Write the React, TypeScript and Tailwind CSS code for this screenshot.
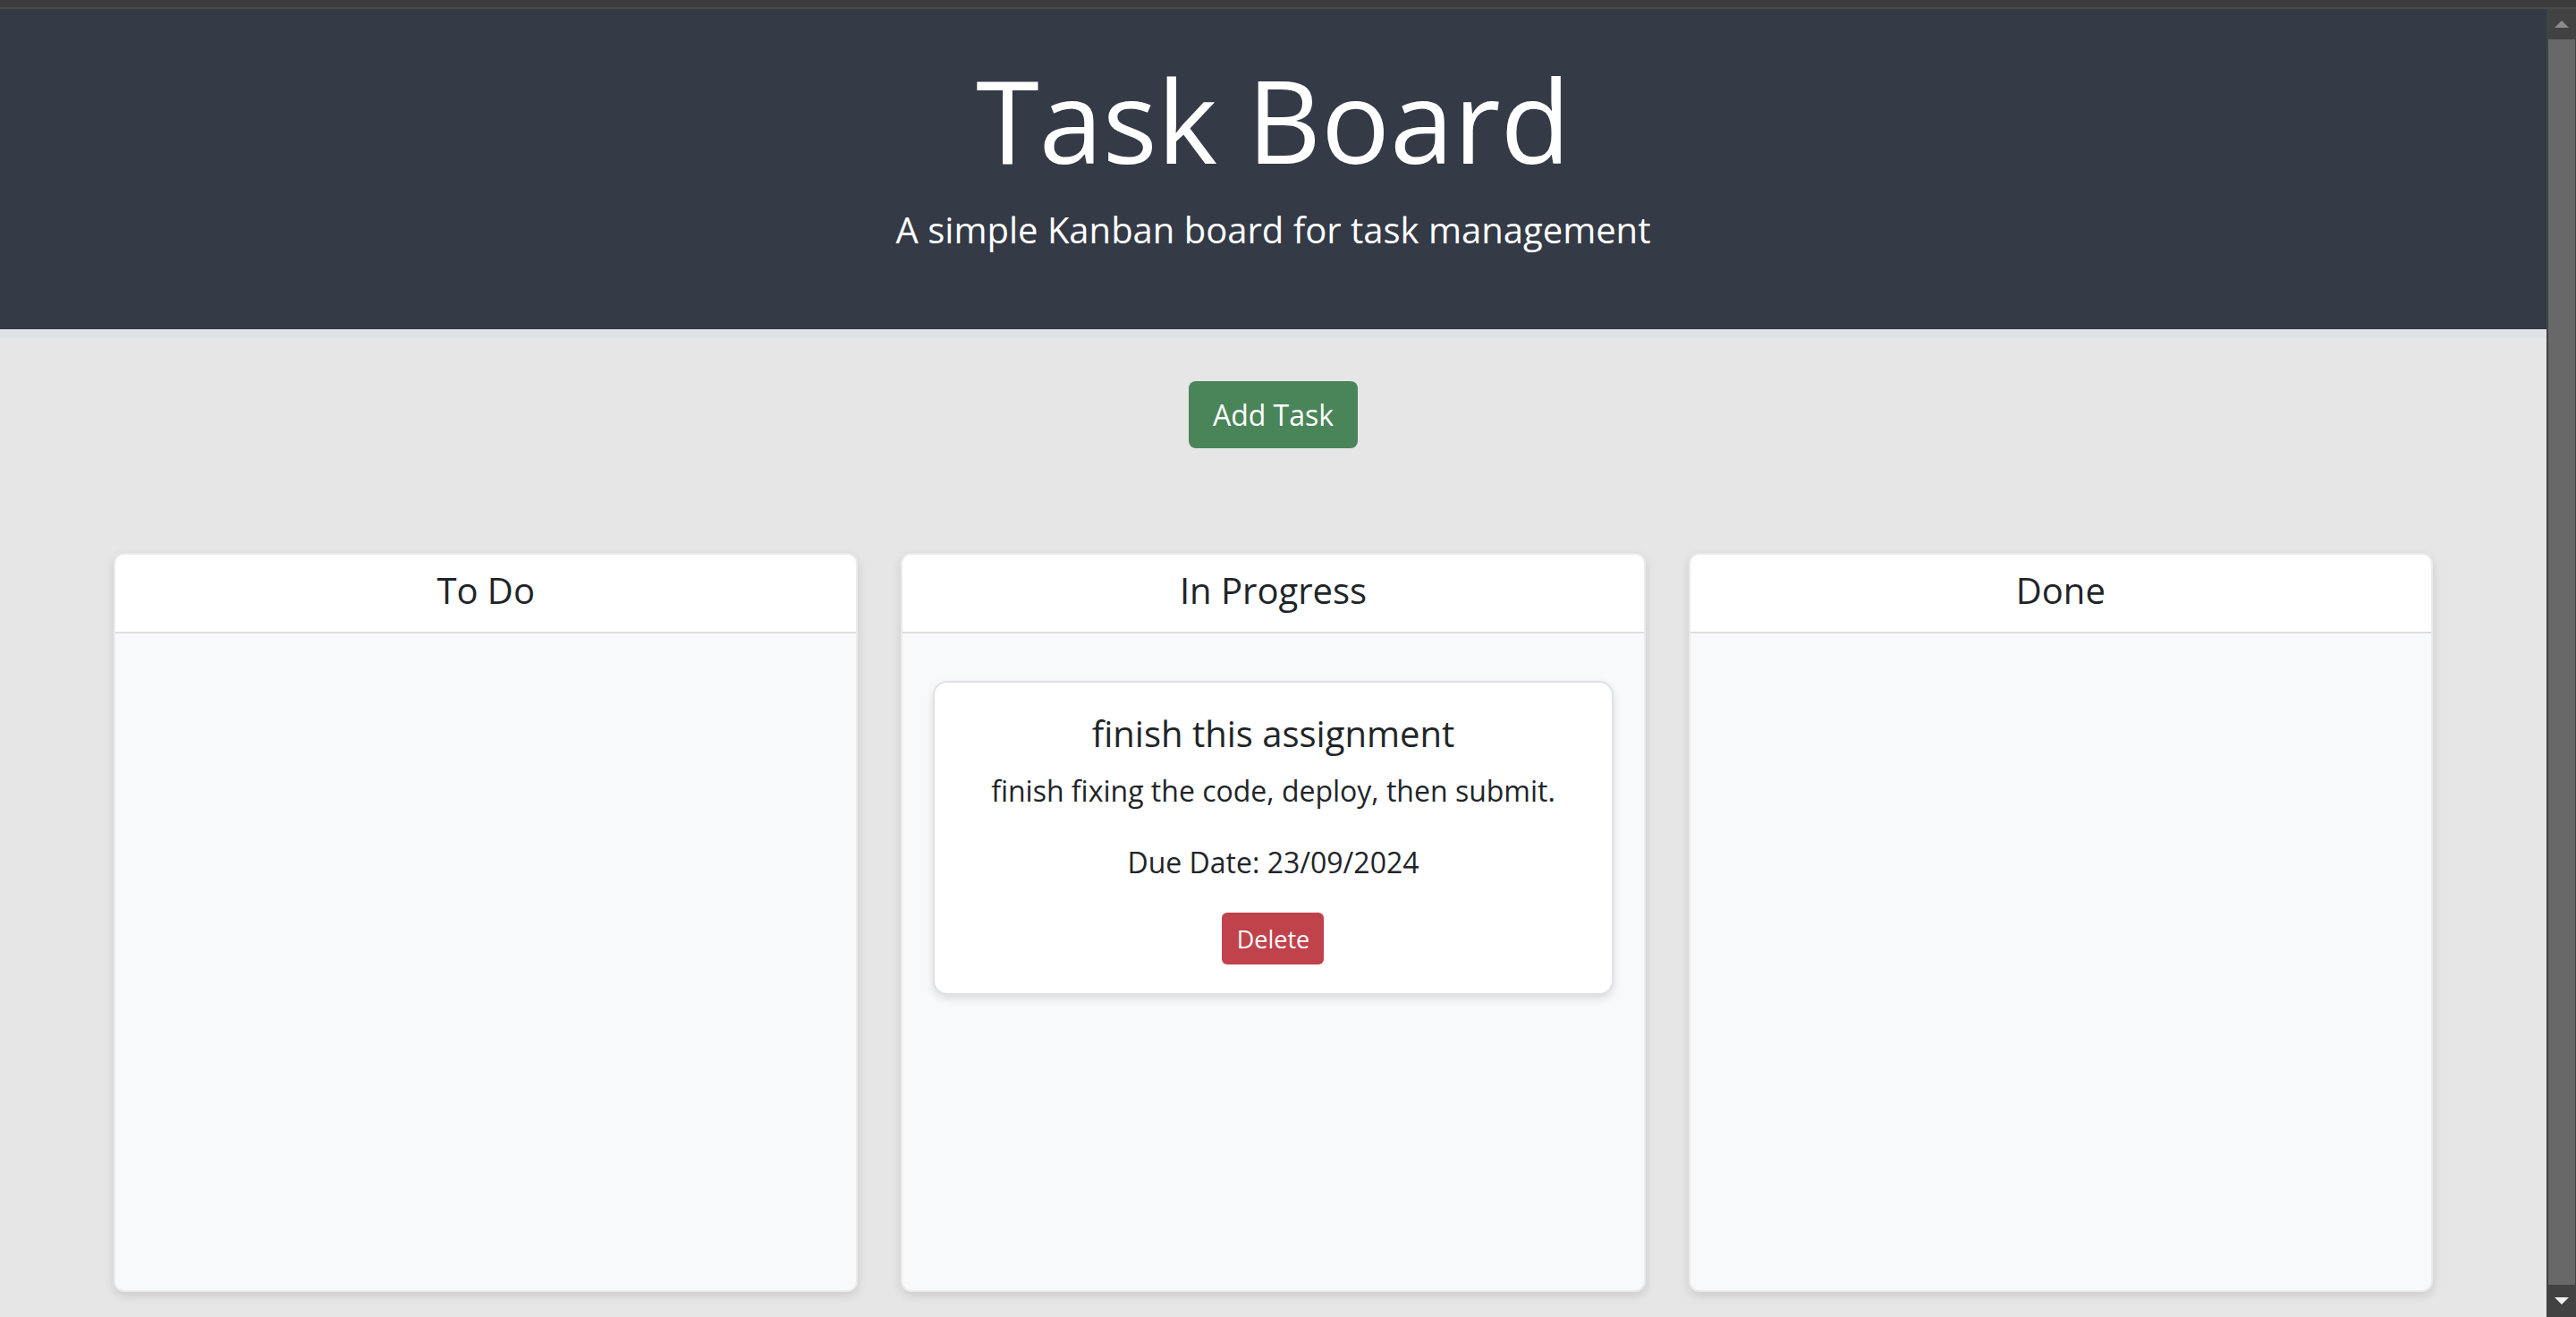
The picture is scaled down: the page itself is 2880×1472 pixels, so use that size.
import React from "react";

type Task = {
    id: number;
    title: string;
    description: string;
    dueDate: string;
};

const columns: { id: string; name: string; tasks: Task[] }[] = [
    { id: "todo", name: "To Do", tasks: [] },
    {
        id: "progress",
        name: "In Progress",
        tasks: [
            {
                id: 1,
                title: "finish this assignment",
                description: "finish fixing the code, deploy, then submit.",
                dueDate: "23/09/2024",
            },
        ],
    },
    { id: "done", name: "Done", tasks: [] },
];

// Single task card
const TaskCard: React.FC<{ task: Task }> = ({ task }) => (
    <div className="mx-[34px] mt-[53px] rounded-[16px] border-2 border-[#dde2e8] bg-white pt-[37px] pb-[32px] flex flex-col items-center text-[#212529] shadow-[0_4px_10px_rgba(0,0,0,0.12)]">
        <h5 className="text-[40px] leading-[40px]">{task.title}</h5>
        <p className="mt-[28px] text-[32px] leading-[32px]">{task.description}</p>
        <p className="mt-[48px] text-[32px] leading-[32px]">Due Date: {task.dueDate}</p>
        <button className="mt-[40px] w-[114px] h-[58px] rounded-[6px] bg-[#c0424b] text-white text-[27px] leading-none">
            Delete
        </button>
    </div>
);

// Fake browser scrollbar on the right edge
const Scrollbar: React.FC = () => (
    <div className="w-[33px] shrink-0 flex flex-col bg-[#424242] pl-[2px] pr-[1px]">
        <div className="h-[34px] flex items-center justify-center">
            <div className="w-0 h-0 border-x-[8px] border-x-transparent border-b-[8px] border-b-[#8c8c8c]" />
        </div>
        <div className="flex-1 bg-[#686868]" />
        <div className="h-[36px] flex items-center justify-center">
            <div className="w-0 h-0 border-x-[8px] border-x-transparent border-t-[8px] border-t-[#f0f0f0]" />
        </div>
    </div>
);

const App: React.FC = () => {
    return (
        <div className="h-[1472px] w-full overflow-hidden flex flex-col font-['Open_Sans',sans-serif]">
            <div className="h-[8px] bg-[#3c3c3c]" />
            <div className="h-[2px] bg-[#4b4b4b]" />
            <div className="flex flex-1 min-h-0">
                <main className="flex-1 min-w-0 bg-[#e6e6e6]">
                    {/* Header */}
                    <header className="h-[358px] bg-[#343a46] flex flex-col items-center pt-[60px] text-white">
                        <h1 className="text-[128px] leading-[128px] font-normal">Task Board</h1>
                        <p className="mt-[39px] text-[40px] leading-[40px]">
                            A simple Kanban board for task management
                        </p>
                    </header>
                    <div className="h-[10px] bg-[#dfe3e7]" />

                    {/* Add task */}
                    <div className="flex justify-center pt-[48px]">
                        <button className="w-[189px] h-[75px] rounded-[8px] bg-[#4a855a] text-white text-[32px] leading-none">
                            Add Task
                        </button>
                    </div>

                    {/* Board */}
                    <section className="grid grid-cols-3 gap-[48px] px-[127px] mt-[117px]">
                        {columns.map((col) => (
                            <div
                                key={col.id}
                                className="h-[826px] flex flex-col rounded-[12px] border-2 border-[#ebebeb] bg-[#f8f9fa] overflow-hidden shadow-[0_4px_12px_rgba(0,0,0,0.12)]"
                            >
                                <div className="bg-white border-b-2 border-[#dedede] pt-[20px] pb-[26px] text-center">
                                    <h4 className="text-[40px] leading-[40px] text-[#212529]">{col.name}</h4>
                                </div>
                                <div className="flex-1">
                                    {col.tasks.map((task) => (
                                        <TaskCard key={task.id} task={task} />
                                    ))}
                                </div>
                            </div>
                        ))}
                    </section>
                </main>
                <Scrollbar />
            </div>
        </div>
    );
};

export default App;
